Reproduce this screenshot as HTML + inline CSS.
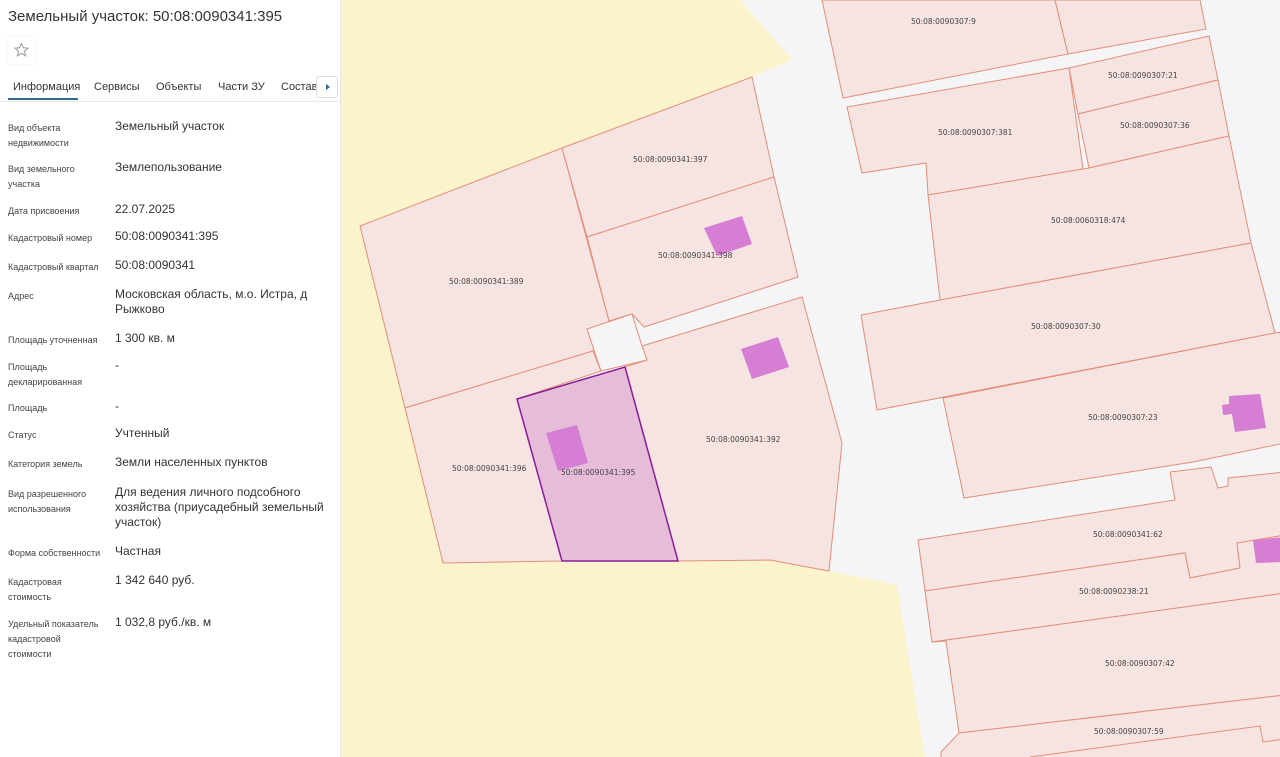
<!DOCTYPE html>
<html><head><meta charset="utf-8">
<style>
*{margin:0;padding:0;box-sizing:border-box}
body{width:1280px;height:757px;overflow:hidden;background:#fff;font-family:"Liberation Sans","DejaVu Sans",sans-serif;color:#333;position:relative}
#panel{position:absolute;left:0;top:0;width:341px;height:757px;background:#fff;border-right:1px solid #e6e6e6}
.title{position:absolute;left:8px;top:8px;font-size:15px;color:#333;white-space:nowrap}
.star{position:absolute;left:8px;top:37px;width:27px;height:27px;border-radius:3px;box-shadow:0 0 3px rgba(0,0,0,.08);background:#fff}
.tabs{position:absolute;left:0;top:76px;width:340px;height:26px;border-bottom:1px solid #e8e8e8}
.tab{position:absolute;top:5px;font-size:11px;color:#333;white-space:nowrap}
.ul{position:absolute;left:8px;top:22px;width:70px;height:2px;background:#2f6a93}
.arr{position:absolute;left:316px;top:0;width:22px;height:22px;border:1px solid #ddd;border-radius:3px;background:#fff}
.arr:after{content:"";position:absolute;left:9px;top:7px;border-left:4px solid #2f6a93;border-top:3px solid transparent;border-bottom:3px solid transparent}
.row{position:absolute;left:0;width:340px}
.lb{position:absolute;left:8px;width:100px;font-size:9px;line-height:15px;color:#444;top:3px}
.vl{position:absolute;left:115px;width:220px;font-size:12px;line-height:15px;color:#333;top:1px}
#map{position:absolute;left:341px;top:0}
</style></head><body>
<div id="panel">
<div class="title">Земельный участок: 50:08:0090341:395</div>
<div class="star"><svg width="27" height="27" viewBox="0 0 27 27"><path d="M13.5 6.5l1.9 4.3 4.6.4-3.5 3 1.1 4.6-4.1-2.5-4.1 2.5 1.1-4.6-3.5-3 4.6-.4z" fill="none" stroke="#999" stroke-width="1"/></svg></div>
<div class="tabs">
<div class="tab" style="left:13px">Информация</div>
<div class="tab" style="left:94px">Сервисы</div>
<div class="tab" style="left:156px">Объекты</div>
<div class="tab" style="left:218px">Части ЗУ</div>
<div class="tab" style="left:281px">Состав</div>
<div class="ul"></div>
<div class="arr"></div>
</div>
<div class="row" style="top:118px"><div class="lb">Вид объекта<br>недвижимости</div><div class="vl">Земельный участок</div></div>
<div class="row" style="top:159px"><div class="lb">Вид земельного<br>участка</div><div class="vl">Землепользование</div></div>
<div class="row" style="top:201px"><div class="lb">Дата присвоения</div><div class="vl">22.07.2025</div></div>
<div class="row" style="top:228px"><div class="lb">Кадастровый номер</div><div class="vl">50:08:0090341:395</div></div>
<div class="row" style="top:257px"><div class="lb">Кадастровый квартал</div><div class="vl">50:08:0090341</div></div>
<div class="row" style="top:286px"><div class="lb">Адрес</div><div class="vl">Московская область, м.о. Истра, д Рыжково</div></div>
<div class="row" style="top:330px"><div class="lb">Площадь уточненная</div><div class="vl">1 300 кв. м</div></div>
<div class="row" style="top:357px"><div class="lb">Площадь<br>декларированная</div><div class="vl">-</div></div>
<div class="row" style="top:398px"><div class="lb">Площадь</div><div class="vl">-</div></div>
<div class="row" style="top:425px"><div class="lb">Статус</div><div class="vl">Учтенный</div></div>
<div class="row" style="top:454px"><div class="lb">Категория земель</div><div class="vl">Земли населенных пунктов</div></div>
<div class="row" style="top:484px"><div class="lb">Вид разрешенного<br>использования</div><div class="vl">Для ведения личного подсобного хозяйства (приусадебный земельный участок)</div></div>
<div class="row" style="top:543px"><div class="lb">Форма собственности</div><div class="vl">Частная</div></div>
<div class="row" style="top:572px"><div class="lb">Кадастровая<br>стоимость</div><div class="vl">1 342 640 руб.</div></div>
<div class="row" style="top:614px"><div class="lb">Удельный показатель<br>кадастровой<br>стоимости</div><div class="vl">1 032,8 руб./кв. м</div></div>
</div>
<svg id="map" width="939" height="757" viewBox="341 0 939 757" font-family="DejaVu Sans, Liberation Sans, sans-serif" font-size="7.5" fill="#444">
<rect x="341" y="0" width="939" height="757" fill="#f5f5f7"/>
<polygon points="341,0 740,0 792,60 752,77 562,148 360,226 443,563 770,560 829,571 897,585 925,757 341,757" fill="#faf3cb"/>
<g fill="#f6e4e2" stroke="#e28f78" stroke-width="1">
<polygon points="360,226 562,148 609,321 593,351 405,408"/>
<polygon points="562,148 752,77 774,177 587,237"/>
<polygon points="587,237 774,177 798,277 644,327 632,314 609,321"/>
<polygon points="642,346 802,297 842,443 829,571 770,560 678,561 625,367 647,360"/>
<polygon points="405,408 593,351 601,371 517,399 562,561 443,563"/>
<polygon points="822,0 1055,0 1068,54 843,98"/>
<polygon points="1055,0 1200,0 1206,29 1068,54"/>
<polygon points="847,107 1069,68 1083,169 928,195 926,163 862,173"/>
<polygon points="1069,68 1209,36 1218,80 1078,114"/>
<polygon points="1078,114 1218,80 1229,136 1089,168"/>
<polygon points="928,195 1083,169 1089,168 1229,136 1251,243 940,300"/>
<polygon points="861,315 940,300 1251,243 1275,333 877,410"/>
<polygon points="943,398 1275,333 1285,332 1285,443 1193,462 964,498"/>
<polygon points="918,540 1175,500 1170,472 1211,467 1218,488 1228,486 1228,478 1285,472 1285,535 1237,543 1240,568 1190,578 1185,553 925,591"/>
<polygon points="925,591 1185,553 1190,578 1240,568 1237,543 1285,535 1285,593 932,642"/>
<polygon points="932,642 1285,593 1285,695 959,733 946,641"/>
<polygon points="941,752 959,733 1285,695 1285,760 941,760"/>
<polyline points="1030,757 1260,726 1263,742 1285,739" fill="none"/>
</g>
<polygon points="587,329 632,314 636,327 642,346 647,360 601,371" fill="#f5f5f7" stroke="#e28f78" stroke-width="1"/>
<polygon points="517,399 625,367 678,561 562,561" fill="#e5bdd8" stroke="#8b1c9b" stroke-width="1.5"/>
<g fill="#d67ed3">
<polygon points="704,228 742,216 752,244 717,256"/>
<polygon points="741,349 778,337 789,367 752,379"/>
<polygon points="546,433 577,425 588,463 558,471"/>
<polygon points="1222,405 1229,404 1229,396 1260,394 1266,428 1235,432 1232,414 1223,415"/>
<polygon points="1253,540 1285,537 1285,562 1256,563"/>
</g>
<text x="449" y="284">50:08:0090341:389</text>
<text x="633" y="162">50:08:0090341:397</text>
<text x="658" y="258">50:08:0090341:398</text>
<text x="706" y="442">50:08:0090341:392</text>
<text x="452" y="471">50:08:0090341:396</text>
<text x="561" y="475">50:08:0090341:395</text>
<text x="911" y="24">50:08:0090307:9</text>
<text x="1108" y="78">50:08:0090307:21</text>
<text x="938" y="135">50:08:0090307:381</text>
<text x="1120" y="128">50:08:0090307:36</text>
<text x="1051" y="223">50:08:0060318:474</text>
<text x="1031" y="329">50:08:0090307:30</text>
<text x="1088" y="420">50:08:0090307:23</text>
<text x="1093" y="537">50:08:0090341:62</text>
<text x="1079" y="594">50:08:0090238:21</text>
<text x="1105" y="666">50:08:0090307:42</text>
<text x="1094" y="734">50:08:0090307:59</text>
</svg>
</body></html>
